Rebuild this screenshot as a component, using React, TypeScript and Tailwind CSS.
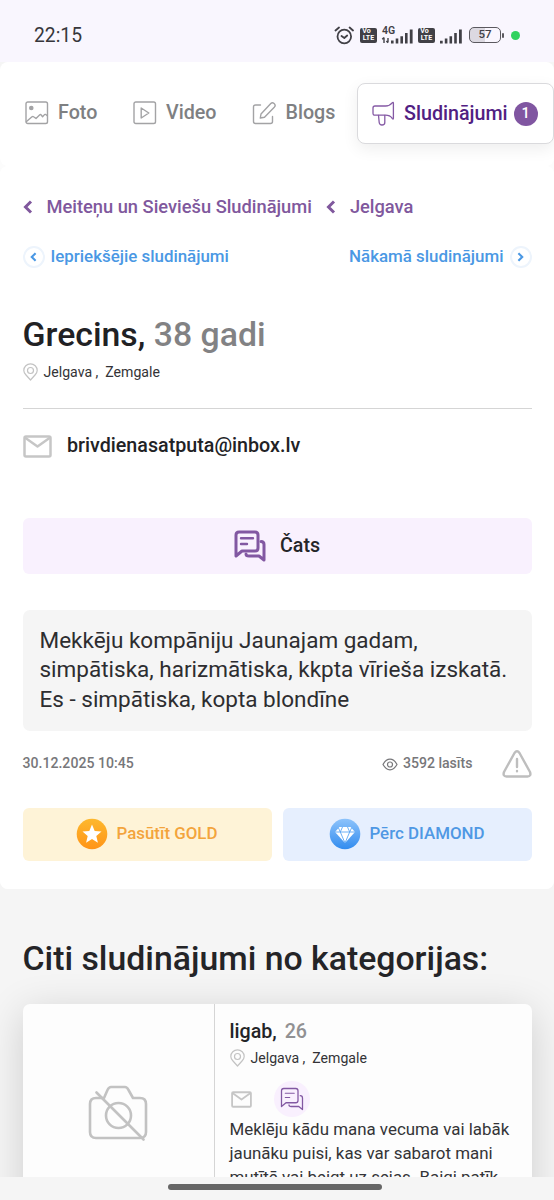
import React from "react";

type IconProps = { className?: string };

const stroke = {
  fill: "none",
  stroke: "currentColor",
  strokeLinecap: "round" as const,
  strokeLinejoin: "round" as const,
};

function ChatIcon({ className, weight = 3 }: IconProps & { weight?: number }) {
  return (
    <svg viewBox="0 0 32 32" className={className} {...stroke} strokeWidth={weight}>
      <path d="M2 26V5Q2 2 5 2H21Q24 2 24 5V18Q24 21 21 21H8Z" />
      <path d="M7 8.3H19M7 14H13" strokeWidth={weight * 0.8} />
      <path d="M27 11.5Q30 11.5 30 14.5V30L25 26H15Q12 26 12 24" />
    </svg>
  );
}

function MailIcon({ className }: IconProps) {
  return (
    <svg viewBox="0 0 29 23" className={className} {...stroke} strokeWidth="2.5">
      <rect x="1.5" y="1.5" width="26" height="20" rx="1.5" />
      <path d="M2.5 3L14.5 11.5L26.5 3" />
    </svg>
  );
}

function PinIcon({ className }: IconProps) {
  return (
    <svg viewBox="0 0 15 18" className={className} {...stroke} strokeWidth="1.2">
      <path d="M7.5 17L3 12C1.5 10.3 .8 9 .8 7.4A6.7 6.5 0 0 1 14.2 7.4C14.2 9 13.5 10.3 12 12Z" />
      <circle cx="7.5" cy="7.5" r="3" />
    </svg>
  );
}

function Chevron({ className, right = false, weight = 3 }: IconProps & { right?: boolean; weight?: number }) {
  return (
    <svg viewBox="0 0 10 14" className={className} fill="none" stroke="currentColor" strokeWidth={weight}>
      <path d={right ? "M2 1.5L7.5 7L2 12.5" : "M8 1.5L2.5 7L8 12.5"} />
    </svg>
  );
}

function VolteIcon() {
  return (
    <span className="flex h-[15px] w-[17px] flex-col items-center justify-center rounded-[2px] bg-[#414046] text-[7px] font-bold leading-[7px] text-white">
      <span className="-ml-[4px]">Vo</span>
      <span>LTE</span>
    </span>
  );
}

function StatusBar() {
  return (
    <header className="flex h-[70px] w-full items-start bg-[#f9f6fe] pl-[34px]">
      <span className="mt-[23px] w-[300px] text-[19.3px] leading-[26px] text-[#37363b]">22:15</span>
      <div className="mt-[25px] flex h-5 items-center text-[#414046]">
        <svg viewBox="0 0 20 19" className="h-[19px] w-5" {...stroke} strokeWidth="1.8">
          <circle cx="10.3" cy="10.5" r="6.8" />
          <path d="M1.5 4.5L5 1.5M15.6 1.5L19 4.5" />
          <path d="M7.5 10L10.3 12L13.2 9.5" />
        </svg>
        <span className="ml-[6px]">
          <VolteIcon />
        </span>
        <svg viewBox="0 0 33 19" className="ml-[4px] h-[19px] w-[33px] overflow-visible" fill="currentColor">
          <text x="1" y="8.3" fontSize="10.5" fontWeight="600" fontFamily="Roboto, sans-serif">4G</text>
          <path d="M3 11.5V17M7 12V16.5M1.2 13.2L3 11.5M5.4 15L7 16.8" fill="none" stroke="currentColor" strokeWidth="1.4" />
          <path d="M10 14.5h2.6v3H10zM14.7 12.5h2.6v5h-2.6zM19.4 10.3H22v7.2h-2.6zM24 7h2.6v10.5H24zM28.8 3.5h2.8v14h-2.8z" />
        </svg>
        <span className="ml-[4px]">
          <VolteIcon />
        </span>
        <svg viewBox="0 0 24 19" className="ml-[4px] h-[19px] w-6" fill="currentColor">
          <path d="M1 14.8h2.7v2.7H1zM5.8 12.5h2.6v5H5.8zM10.5 10.3h2.6v7.2h-2.6zM15.2 7h2.6v10.5h-2.6zM20 3.5h2.8v14H20z" />
        </svg>
        <span className="ml-[6px] flex h-[16px] w-[32px] items-center justify-center rounded-[5px] border-[1.5px] border-[#5b595f] bg-gradient-to-r from-[#dcd9e1] from-50% to-[#f9f6fe] to-50% text-[11.5px] font-medium">57</span>
        <span className="ml-px h-[5px] w-[2px] rounded-sm bg-[#5b595f]" />
        <span className="ml-[7px] size-[9px] rounded-full bg-[#32d25f]" />
      </div>
    </header>
  );
}

function Tabs() {
  return (
    <nav className="flex h-[104px] items-start rounded-[8px] bg-white text-[19.7px] font-medium leading-6 text-[#7e8082]">
      <a className="ml-[25px] mt-[39px] flex h-6 w-[108px] items-center">
        <svg viewBox="0 0 24 24" className="mr-[9px] size-6 shrink-0 text-[#a3a3a5]" {...stroke} strokeWidth="1.4">
          <rect x="1" y="1" width="21.5" height="21.5" rx="1.8" />
          <circle cx="6.3" cy="7" r="1.6" fill="currentColor" />
          <path d="M1.5 20.5L7 15.8Q7.8 15.2 8.6 15.8L11 17.5L14.8 13.8Q15.6 13.1 16.2 14L17.6 15.7L19.5 13.6Q20.3 12.8 22 14.5" />
        </svg>
        <span>Foto</span>
      </a>
      <a className="mt-[39px] flex h-6 w-[119px] items-center">
        <svg viewBox="0 0 24 24" className="mr-[9px] size-6 shrink-0 text-[#a3a3a5]" {...stroke} strokeWidth="1.4">
          <rect x="1" y="1" width="21.5" height="21.5" rx="1.8" />
          <path d="M8.2 7V17L15.8 12Z" />
        </svg>
        <span>Video</span>
      </a>
      <a className="mt-[39px] flex h-6 w-[105px] items-center">
        <svg viewBox="0 0 24 24" className="mr-[9.5px] size-6 shrink-0 text-[#a3a3a5]" {...stroke} strokeWidth="1.4">
          <path d="M8.5 4H3.5Q1.5 4 1.5 6V20.5Q1.5 22.5 3.5 22.5H18.5Q20.5 22.5 20.5 20.5V15.5" />
          <path d="M9 13L18.8 2.6Q20.3 1 22.1 2.5Q24 4.2 22.5 5.9L12.5 16.2L8.3 17Z" />
        </svg>
        <span>Blogs</span>
      </a>
      <a className="mt-[21px] flex h-[61px] w-[197px] shrink-0 items-center rounded-[8px] border border-[#dadadd] bg-white pl-[14px] text-[#512082] shadow-[0_5px_16px_rgba(0,0,0,0.07)]">
        <svg viewBox="0 0 23 25" className="mr-[9px] h-[25px] w-[23px] shrink-0 text-[#855aa5]" {...stroke} strokeWidth="1.3">
          <path d="M3 5H13.5Q17.5 5 20.2 1.8Q21.4 .6 21.4 2.3V17.2Q21.4 18.8 20.2 17.3Q18 14.2 13.5 14.2H3Q1 14.2 1 12.2V7Q1 5 3 5Z" />
          <path d="M6.5 14.3L7.2 21.5Q7.5 24 10 24Q12.8 24 12.8 21.5V14.3" />
        </svg>
        <span>Sludinājumi</span>
        <span className="ml-[6px] flex size-[24px] items-center justify-center rounded-full bg-[#8056a1] text-[14.5px] text-white">1</span>
      </a>
    </nav>
  );
}

function Location() {
  return (
    <div className="flex h-[18px] items-center text-[14.1px] text-[#333336]">
      <PinIcon className="mr-[6px] h-[18px] w-[15px] text-[#c3c3c3]" />
      <span className="pt-px">Jelgava ,&nbsp; Zemgale</span>
    </div>
  );
}

function Advert() {
  return (
    <main className="h-[723px] rounded-[8px] bg-white px-[22.5px] pt-[29px]">
      <div className="flex h-6 items-center text-[18.3px] font-medium text-[#80589d]">
        <Chevron className="mr-[14px] h-[14px] w-[10px]" />
        <span>Meiteņu un Sieviešu Sludinājumi</span>
        <Chevron className="ml-[14px] mr-[14px] h-[14px] w-[10px]" />
        <span>Jelgava</span>
      </div>
      <div className="mt-[26px] flex h-6 items-center justify-between text-[16.9px] font-medium text-[#4a98e4]">
        <a className="flex items-center">
          <span className="mr-[6px] flex size-[22px] items-center justify-center rounded-full border-2 border-[#edf4fc]">
            <Chevron className="h-[10px] w-[7px]" />
          </span>
          <span>Iepriekšējie sludinājumi</span>
        </a>
        <a className="flex items-center">
          <span>Nākamā sludinājumi</span>
          <span className="ml-[6px] flex size-[22px] items-center justify-center rounded-full border-2 border-[#edf4fc]">
            <Chevron right className="h-[10px] w-[7px]" />
          </span>
        </a>
      </div>
      <h1 className="mt-[46px] h-10 text-[33.8px] font-medium leading-10 text-[#212124]">
        Grecins, <span className="text-[#828284]">38 gadi</span>
      </h1>
      <div className="mt-[8px]">
        <Location />
      </div>
      <hr className="mt-[27px] h-px border-0 bg-[#d5d5d5]" />
      <div className="mt-[25px] flex h-6 items-center text-[19.7px] font-medium text-[#222225]">
        <MailIcon className="mr-[15.5px] h-[23px] w-[29px] text-[#c6c6c6]" />
        brivdienasatputa@inbox.lv
      </div>
      <button className="mt-[59.5px] flex h-[56px] w-full items-center justify-center rounded-[6px] bg-[#f9f1fe] text-[19.7px] font-medium text-[#252529]">
        <ChatIcon className="mr-[14px] size-8 text-[#8258a2]" />
        <span className="pt-px">Čats</span>
      </button>
      <div className="mt-[36px] h-[121px] whitespace-nowrap rounded-[7px] bg-[#f5f5f5] pl-[17px] pt-[16.5px] text-[22.5px] leading-[29.4px] text-[#2d2d30]">
        <p>Mekkēju kompāniju Jaunajam gadam,</p>
        <p>simpātiska, harizmātiska, kkpta vīrieša izskatā.</p>
        <p>Es - simpātiska, kopta blondīne</p>
      </div>
      <div className="mt-[18.5px] flex h-[30px] items-center text-[14.1px] font-medium text-[#77777a]">
        <span className="grow">30.12.2025 10:45</span>
        <svg viewBox="0 0 16 13" className="mr-[5px] h-[13px] w-4" {...stroke} strokeWidth="1.2">
          <path d="M1 6.5Q4 1.2 8 1.2T15 6.5Q12 11.8 8 11.8T1 6.5Z" />
          <circle cx="8" cy="6.5" r="2.5" />
        </svg>
        <span className="mr-[29px]">3592 lasīts</span>
        <svg viewBox="0 0 30 28" className="h-7 w-[30px] text-[#bebebe]" {...stroke} strokeWidth="2.4">
          <path d="M12.5 3Q15 -.4 17.5 3L28 22Q29.5 26.3 25.5 26.5H4.5Q.5 26.3 2 22Z" />
          <path d="M15 9V17M15 21V21.2" />
        </svg>
      </div>
      <div className="mt-[28.5px] flex gap-[11px] text-[16.9px] font-medium">
        <button className="flex h-[53px] flex-1 items-center justify-center rounded-[6px] bg-[#fef3d7] text-[#f3a43c]">
          <svg viewBox="0 0 32 32" className="mr-[8px] size-8">
            <defs>
              <linearGradient id="gold" x1="0" y1="0" x2="0" y2="1">
                <stop stopColor="#fdb82e" />
                <stop offset="1" stopColor="#ff9417" />
              </linearGradient>
            </defs>
            <circle cx="16" cy="16" r="15.3" fill="url(#gold)" />
            <path d="M16 6.5L18.7 12.9L25.5 13.5L20.3 18L21.9 24.7L16 21.1L10.1 24.7L11.7 18L6.5 13.5L13.3 12.9Z" fill="white" />
          </svg>
          Pasūtīt GOLD
        </button>
        <button className="flex h-[53px] flex-1 items-center justify-center rounded-[6px] bg-[#e6effe] text-[#4f98e4]">
          <svg viewBox="0 0 32 32" className="mr-[8px] size-8">
            <defs>
              <linearGradient id="diamond" x1="0" y1="0" x2="0" y2="1">
                <stop stopColor="#8dc3fb" />
                <stop offset="1" stopColor="#328cef" />
              </linearGradient>
            </defs>
            <circle cx="16" cy="16" r="15.3" fill="url(#diamond)" />
            <path d="M10.5 9H21.5L26 14L16 25L6 14Z" fill="white" />
            <path d="M6 14H26M13.5 9L11.3 14L16 25L20.7 14L18.5 9M11.3 14L9.5 10M20.7 14L22.5 10" fill="none" stroke="#5ba6f4" strokeWidth=".9" />
          </svg>
          Pērc DIAMOND
        </button>
      </div>
    </main>
  );
}

function OtherAdverts() {
  return (
    <section className="h-[288px] overflow-hidden px-[22.5px] pt-[50px]">
      <h2 className="h-10 whitespace-nowrap text-[33.8px] font-medium leading-10 text-[#242427]">Citi sludinājumi no kategorijas:</h2>
      <article className="mt-[25px] flex h-[240px] rounded-[7px] bg-[#fdfdfd] shadow-[0_8px_40px_rgba(0,0,0,0.16)]">
        <div className="flex h-[217px] w-[191.5px] shrink-0 items-center justify-center">
          <svg viewBox="0 0 60 56" className="h-14 w-[60px] text-[#c2c2c2]" {...stroke} strokeWidth="2.6">
            <path d="M16 13H8Q2 13 2 19V47Q2 53 8 53H52Q58 53 58 47V19Q58 13 52 13H45L40.5 5Q39 2 37 2H23Q21 2 19.5 5Z" />
            <circle cx="30.5" cy="30.5" r="12.5" />
            <path d="M8.5 7.5L55.5 54.5" />
          </svg>
        </div>
        <div className="w-px bg-[#d5d5d5]" />
        <div className="whitespace-nowrap pl-[14.5px] pt-[16px]">
          <h3 className="text-[19.7px] font-medium leading-6 text-[#242427]">
            ligab, <span className="ml-[3px] text-[#919193]">26</span>
          </h3>
          <div className="mt-[5px]">
            <Location />
          </div>
          <div className="mt-[14px] flex h-9 items-center">
            <MailIcon className="ml-[1px] h-[17px] w-[21px] text-[#c6c6c6]" />
            <span className="ml-[22px] flex size-[36px] items-center justify-center rounded-full bg-[#f9f0fe]">
              <ChatIcon className="size-6 text-[#8258a2]" weight={1.7} />
            </span>
          </div>
          <div className="text-[16.9px] leading-6 text-[#343437]">
            <p>Meklēju kādu mana vecuma vai labāk</p>
            <p>jaunāku puisi, kas var sabarot mani</p>
            <p>mutītē vai beigt uz sejas. Baigi patīk</p>
          </div>
        </div>
      </article>
    </section>
  );
}

export default function App() {
  return (
    <div className="h-[1200px] w-[554px] overflow-hidden bg-[#f5f5f5] font-['Roboto',sans-serif]">
      <StatusBar />
      <div className="-mt-2 rounded-b-[8px] bg-gradient-to-b from-[#f5f5f5] from-5% to-[#fcfcfc] to-6%">
        <Tabs />
        <Advert />
      </div>
      <OtherAdverts />
      <footer className="flex h-[23px] justify-center bg-[#f5f5f5] pt-[7px]">
        <div className="mr-[4px] h-[6px] w-[214px] rounded-full bg-[#666666]" />
      </footer>
    </div>
  );
}
